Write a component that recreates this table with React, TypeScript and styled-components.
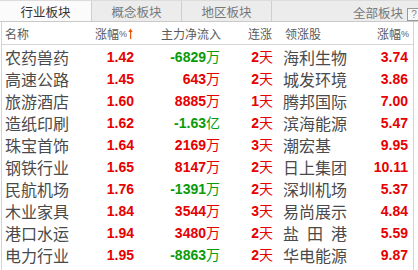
import React from "react";
import styled, { createGlobalStyle } from "styled-components";

const Global = createGlobalStyle`
  html, body { margin: 0; padding: 0; background: #ffffff; }
  #root { width: 418px; height: 270px; overflow: hidden; }
`;

const CJK = `"Noto Sans CJK SC", "Noto Sans", sans-serif`;
const NUM = `"Liberation Sans", Arial, sans-serif`;

const Page = styled.div`
  width: 418px;
  height: 270px;
  overflow: hidden;
  background: #ffffff;
  font-family: ${CJK};
`;

const TabBar = styled.div`
  display: flex;
  height: 22px;
  box-sizing: border-box;
  border-top: 1px solid #dcdcdc;
  border-bottom: 1px solid #c9c9c9;
  background: #ececec;
`;

const Tab = styled.div<{ $active?: boolean; $w: number }>`
  width: ${(p) => p.$w}px;
  flex: none;
  display: flex;
  align-items: center;
  justify-content: center;
  border-right: 1px solid #cfcfcf;
  background: ${(p) => (p.$active ? "#fbfbfb" : "#ececec")};
  color: ${(p) => (p.$active ? "#333333" : "#777777")};
  font-size: 12.5px;
  line-height: 1;
  padding-top: 2px;
  box-sizing: border-box;
`;

const Spacer = styled.div`
  flex: 1;
`;

const AllLabel = styled.div`
  display: flex;
  align-items: center;
  color: #777777;
  font-size: 12.5px;
  padding-top: 2px;
  margin-right: 4px;
`;

const Help = styled.div`
  flex: none;
  width: 12px;
  height: 11px;
  margin-top: 7px;
  margin-right: -3px;
  border: 1px solid #9a9a9a;
  background: #f7f7f7;
  color: #888;
  font-family: ${NUM};
  font-size: 10px;
  line-height: 11px;
  text-align: center;
`;

const Table = styled.div`
  margin-left: 1px;
  width: 413px;
  box-sizing: border-box;
  border-left: 1px solid #d4d4d4;
  border-right: 1px solid #d4d4d4;
  height: 260px;
`;

const Grid = styled.div<{ $head?: boolean }>`
  display: grid;
  grid-template-columns: 88px 44px 87px 62px 63px 1fr;
  height: ${(p) => (p.$head ? "23px" : "22px")};
  align-items: center;
  box-sizing: border-box;
  ${(p) => (p.$head ? "border-bottom: 1px solid #d6d6d6; padding-top: 1px;" : "padding-top: 0px;")}
`;

const HeadCell = styled.div<{ $align?: "left" | "right"; $pl?: number; $pr?: number }>`
  font-size: 12px;
  color: #5a5a5a;
  text-align: ${(p) => p.$align || "left"};
  padding-left: ${(p) => p.$pl || 0}px;
  padding-right: ${(p) => p.$pr || 0}px;
  white-space: nowrap;
  display: flex;
  align-items: center;
  justify-content: ${(p) => (p.$align === "right" ? "flex-end" : "flex-start")};
`;

const Pct = styled.span`
  font-family: ${NUM};
  font-size: 9px;
  margin-left: 0px;
`;

const Arrow = styled.svg`
  margin-left: 1px;
  margin-right: -1px;
`;

const NameCell = styled.div<{ $pl?: number }>`
  font-size: 16px;
  color: #4a4a4a;
  padding-left: ${(p) => p.$pl || 0}px;
  white-space: nowrap;
  line-height: 22px;
`;

const NumCell = styled.div<{ $color: string; $pr?: number }>`
  text-align: right;
  padding-right: ${(p) => p.$pr || 0}px;
  color: ${(p) => p.$color};
  font-family: ${NUM};
  font-weight: bold;
  font-size: 14px;
  white-space: nowrap;
  line-height: 22px;
`;

const Unit = styled.span`
  font-family: ${CJK};
  font-weight: normal;
  font-size: 14px;
`;

const RED = "#e60000";
const GREEN = "#0a9a0a";

type Row = {
  name: string;
  zf: string;
  flow: string;
  unit: string;
  days: string;
  lead: string;
  lzf: string;
};

const rows: Row[] = [
  { name: "农药兽药", zf: "1.42", flow: "-6829", unit: "万", days: "2", lead: "海利生物", lzf: "3.74" },
  { name: "高速公路", zf: "1.45", flow: "643", unit: "万", days: "2", lead: "城发环境", lzf: "3.86" },
  { name: "旅游酒店", zf: "1.60", flow: "8885", unit: "万", days: "1", lead: "腾邦国际", lzf: "7.00" },
  { name: "造纸印刷", zf: "1.62", flow: "-1.63", unit: "亿", days: "2", lead: "滨海能源", lzf: "5.47" },
  { name: "珠宝首饰", zf: "1.64", flow: "2169", unit: "万", days: "3", lead: "潮宏基", lzf: "9.95" },
  { name: "钢铁行业", zf: "1.65", flow: "8147", unit: "万", days: "2", lead: "日上集团", lzf: "10.11" },
  { name: "民航机场", zf: "1.76", flow: "-1391", unit: "万", days: "2", lead: "深圳机场", lzf: "5.37" },
  { name: "木业家具", zf: "1.84", flow: "3544", unit: "万", days: "3", lead: "易尚展示", lzf: "4.84" },
  { name: "港口水运", zf: "1.94", flow: "3480", unit: "万", days: "2", lead: "盐\u2002田\u2002港", lzf: "5.59" },
  { name: "电力行业", zf: "1.95", flow: "-8863", unit: "万", days: "2", lead: "华电能源", lzf: "9.87" },
  { name: "化工行业", zf: "1.98", flow: "-2150", unit: "万", days: "1", lead: "江山股份", lzf: "6.12" },
];

export default function App() {
  return (
    <Page>
      <Global />
      <TabBar>
        <Tab $active $w={92}>行业板块</Tab>
        <Tab $w={90}>概念板块</Tab>
        <Tab $w={90}>地区板块</Tab>
        <Spacer />
        <AllLabel>全部板块</AllLabel>
        <Help>?</Help>
      </TabBar>
      <Table>
        <Grid $head>
          <HeadCell $pl={3}>名称</HeadCell>
          <HeadCell $align="right" $pr={2}>
            涨幅<Pct>%</Pct>
            <Arrow width="5" height="11" viewBox="0 0 5 11">
              <path d="M2.5 0.5 L0.3 4 L4.7 4 Z" fill="#ee5500" />
              <rect x="2" y="3" width="1.2" height="8" fill="#ee5500" />
            </Arrow>
          </HeadCell>
          <HeadCell $align="right">主力净流入</HeadCell>
          <HeadCell $align="right" $pr={11}>连涨</HeadCell>
          <HeadCell $pl={2}>领涨股</HeadCell>
          <HeadCell $align="right" $pr={4}>
            涨幅<Pct>%</Pct>
          </HeadCell>
        </Grid>
        {rows.map((r) => {
          const flowColor = r.flow.startsWith("-") ? GREEN : RED;
          return (
            <Grid key={r.name}>
              <NameCell $pl={3}>{r.name}</NameCell>
              <NumCell $color={RED}>{r.zf}</NumCell>
              <NumCell $color={flowColor} $pr={1}>
                {r.flow}
                <Unit>{r.unit}</Unit>
              </NumCell>
              <NumCell $color={RED} $pr={10}>
                {r.days}
                <Unit>天</Unit>
              </NumCell>
              <NameCell>{r.lead}</NameCell>
              <NumCell $color={RED} $pr={5}>{r.lzf}</NumCell>
            </Grid>
          );
        })}
      </Table>
    </Page>
  );
}
